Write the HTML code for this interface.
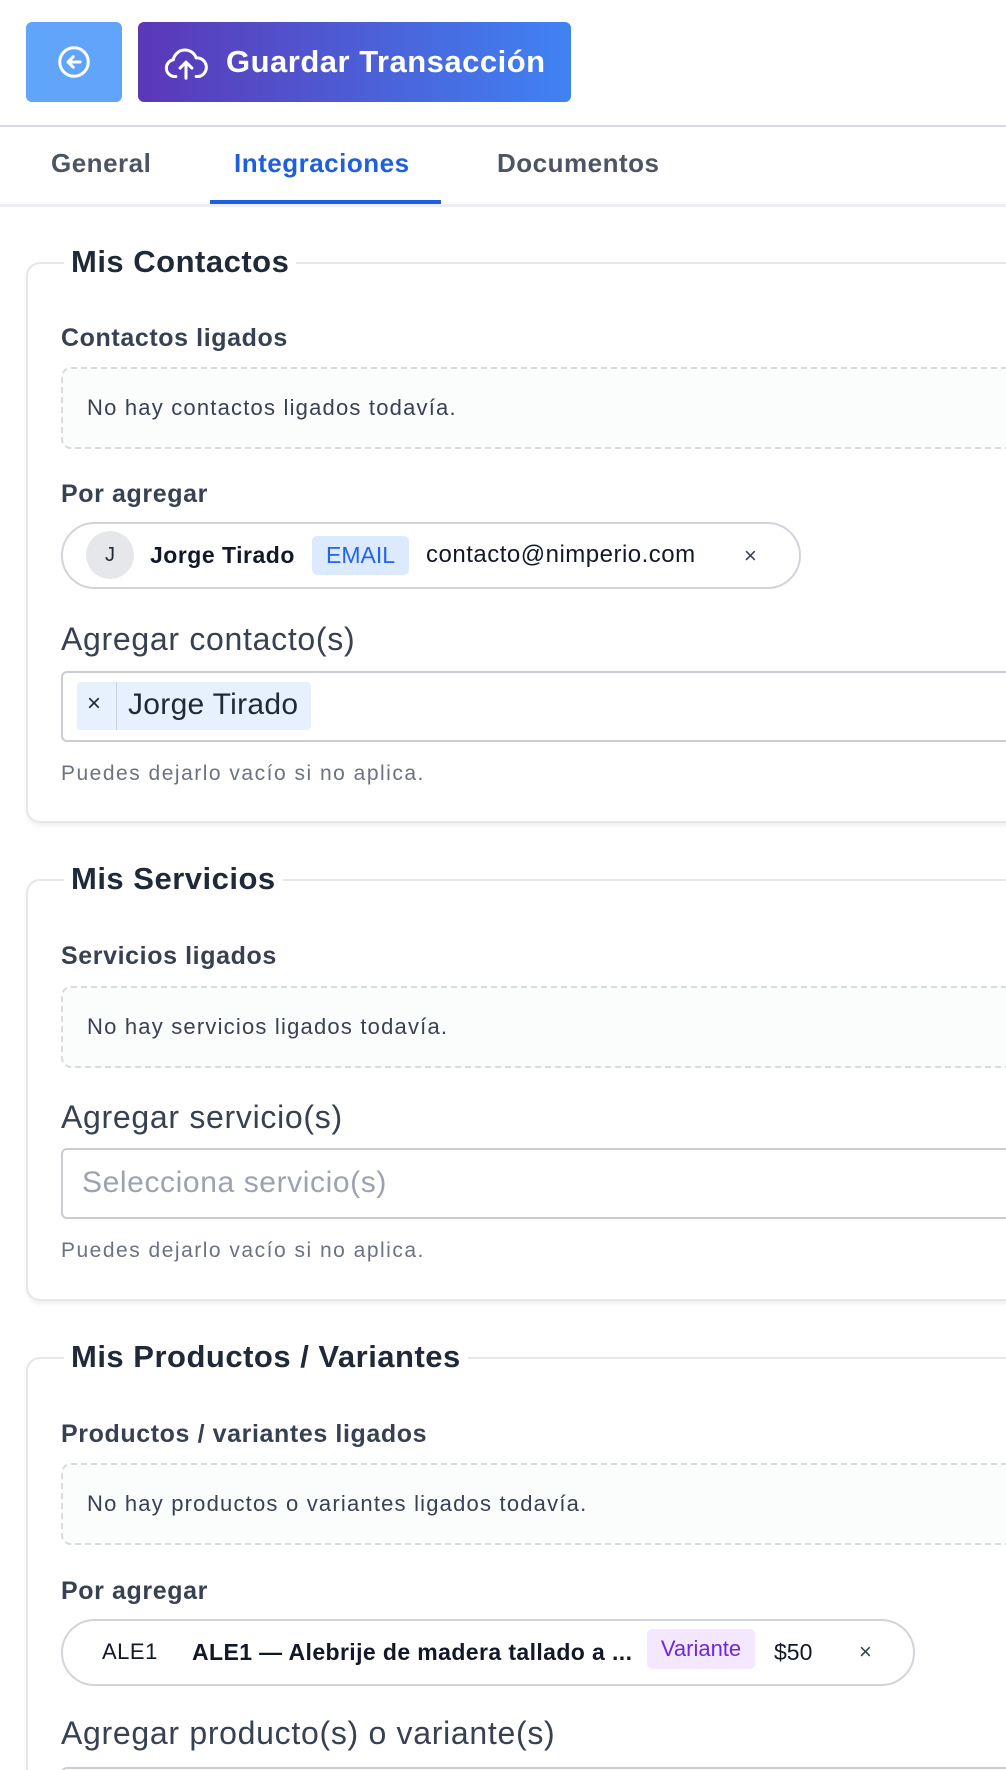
<!DOCTYPE html>
<html><head><meta charset="utf-8"><style>
*{box-sizing:border-box;margin:0;padding:0}
html,body{width:1006px;height:1770px;overflow:hidden}
body{background:#fff;font-family:"Liberation Sans",sans-serif;color:#1f2937;position:relative}
.a{position:absolute;white-space:nowrap}
.card{position:absolute;left:26px;width:1010px;border:2px solid #e5e7eb;border-radius:14px;box-shadow:0 3px 4px rgba(0,0,0,.06)}
.leg{position:absolute;left:36px;top:-21px;background:#fff;padding:0 7px;font-size:31px;font-weight:bold;color:#1f2937;line-height:38px;letter-spacing:0.5px}
.lbl{font-size:25px;font-weight:bold;color:#374151;line-height:30px;letter-spacing:0.6px}
.dash{position:absolute;left:61px;width:960px;height:82px;border:2px dashed #d8dbe0;border-radius:10px;background:#fbfcfc;font-size:22px;color:#374151;padding-left:24px;line-height:78px;letter-spacing:1.2px}
.big{font-size:32px;color:#374151;line-height:36px;letter-spacing:0.7px}
.inp{position:absolute;left:61px;width:960px;height:71px;border:2px solid #c9ccd1;border-radius:6px}
.help{font-size:21px;color:#6b7280;letter-spacing:1.5px}
.pill{position:absolute;left:61px;height:67px;border:2px solid #d1d5db;border-radius:34px}
</style></head><body>
<div class="a" style="left:26px;top:22px;width:96px;height:80px;background:#60a5fa;border-radius:6px"></div>
<svg class="a" style="left:56px;top:44px" width="36" height="36" viewBox="0 0 24 24" fill="none" stroke="#fff" stroke-width="2" stroke-linecap="round" stroke-linejoin="round"><circle cx="12" cy="12" r="9.5"/><path d="M16 12H8M11.5 8.5 8 12l3.5 3.5"/></svg>
<div class="a" style="left:138px;top:22px;width:433px;height:80px;border-radius:6px;background:linear-gradient(90deg,#5b37b7,#3f83f3)"></div>
<svg class="a" style="left:164px;top:44px" width="44" height="38" viewBox="0 0 26 22" fill="none" stroke="#fff" stroke-width="1.8" stroke-linecap="round" stroke-linejoin="round"><path d="M7 19H6a5 5 0 0 1-.5-9.9A7 7 0 0 1 19 8a5.5 5.5 0 0 1 1 11h-1"/><path d="M13 20v-9M9.5 14 13 10.5 16.5 14"/></svg>
<div class="a" style="left:226px;top:39px;font-size:31px;font-weight:bold;color:#fff;line-height:46px;letter-spacing:0.5px">Guardar Transacción</div>
<div class="a" style="left:0;top:125px;width:1006px;height:2px;background:#d8dbe2"></div>
<div class="a" style="left:0;top:204px;width:1006px;height:3px;background:#eceef1"></div>
<div class="a" style="left:51px;top:148px;font-size:26px;font-weight:bold;color:#4b5563;line-height:30px;letter-spacing:0.5px">General</div>
<div class="a" style="left:234px;top:148px;font-size:26px;font-weight:bold;color:#1d5fe0;line-height:30px;letter-spacing:0.5px">Integraciones</div>
<div class="a" style="left:497px;top:148px;font-size:26px;font-weight:bold;color:#4b5563;line-height:30px;letter-spacing:0.5px">Documentos</div>
<div class="a" style="left:210px;top:200px;width:231px;height:4px;background:#1d5fe0"></div>

<div class="card" style="top:262px;height:561px"><div class="leg">Mis Contactos</div></div>
<div class="a lbl" style="left:61px;top:323px">Contactos ligados</div>
<div class="dash" style="top:367px">No hay contactos ligados todavía.</div>
<div class="a lbl" style="left:61px;top:479px">Por agregar</div>
<div class="pill" style="top:522px;width:740px"></div>
<div class="a" style="left:86px;top:531px;width:48px;height:48px;border-radius:50%;background:#e5e7eb;text-align:center;line-height:48px;font-size:20px">J</div>
<div class="a" style="left:150px;top:542px;font-size:23px;font-weight:bold;color:#111827;line-height:26px;letter-spacing:0.5px">Jorge Tirado</div>
<div class="a" style="left:312px;top:536px;width:97px;height:39px;background:#dbeafe;border-radius:5px;color:#2563eb;font-size:23px;text-align:center;line-height:39px">EMAIL</div>
<div class="a" style="left:426px;top:542px;font-size:24px;color:#111827;line-height:26px;letter-spacing:0.5px">contacto@nimperio.com</div>
<div class="a" style="left:744px;top:543px;font-size:22px;color:#374151">×</div>
<div class="a big" style="left:61px;top:621px">Agregar contacto(s)</div>
<div class="inp" style="top:671px"></div>
<div class="a" style="left:77px;top:682px;width:234px;height:48px;background:#e6f1fd;border-radius:4px"></div>
<div class="a" style="left:116px;top:682px;width:1px;height:48px;background:#c6d4e6"></div>
<div class="a" style="left:87px;top:690px;font-size:24px;color:#1f2937">×</div>
<div class="a" style="left:128px;top:687px;font-size:30px;color:#1f2937;line-height:36px;letter-spacing:0.3px">Jorge Tirado</div>
<div class="a help" style="left:61px;top:762px">Puedes dejarlo vacío si no aplica.</div>

<div class="card" style="top:879px;height:422px"><div class="leg">Mis Servicios</div></div>
<div class="a lbl" style="left:61px;top:941px">Servicios ligados</div>
<div class="dash" style="top:986px">No hay servicios ligados todavía.</div>
<div class="a big" style="left:61px;top:1099px">Agregar servicio(s)</div>
<div class="inp" style="top:1148px"></div>
<div class="a" style="left:82px;top:1165px;font-size:30px;color:#9ca3af;line-height:36px;letter-spacing:0.6px">Selecciona servicio(s)</div>
<div class="a help" style="left:61px;top:1239px">Puedes dejarlo vacío si no aplica.</div>

<div class="card" style="top:1357px;height:500px"><div class="leg">Mis Productos / Variantes</div></div>
<div class="a lbl" style="left:61px;top:1419px">Productos / variantes ligados</div>
<div class="dash" style="top:1463px">No hay productos o variantes ligados todavía.</div>
<div class="a lbl" style="left:61px;top:1576px">Por agregar</div>
<div class="pill" style="top:1619px;width:854px"></div>
<div class="a" style="left:102px;top:1639px;font-size:22px;color:#111827;line-height:26px;letter-spacing:0.5px">ALE1</div>
<div class="a" style="left:192px;top:1639px;font-size:23px;font-weight:bold;color:#111827;line-height:26px;letter-spacing:0.4px">ALE1 — Alebrije de madera tallado a ...</div>
<div class="a" style="left:647px;top:1629px;width:108px;height:40px;background:#f3e8ff;border-radius:5px;color:#6d28d9;font-size:22px;text-align:center;line-height:40px">Variante</div>
<div class="a" style="left:774px;top:1639px;font-size:23px;color:#111827;line-height:26px">$50</div>
<div class="a" style="left:859px;top:1639px;font-size:22px;color:#374151">×</div>
<div class="a big" style="left:61px;top:1715px">Agregar producto(s) o variante(s)</div>
<div class="inp" style="top:1767px"></div>
</body></html>
